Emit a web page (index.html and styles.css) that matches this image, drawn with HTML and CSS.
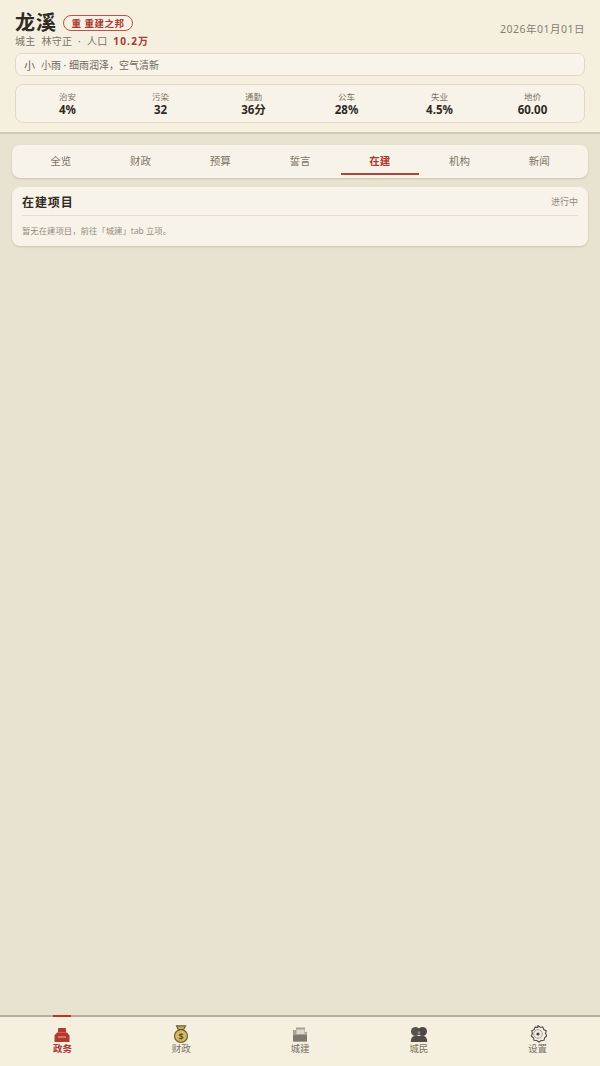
FILE: index.html
```html
<!DOCTYPE html>
<html lang="zh-CN">
<head>
    <meta charset="UTF-8">
    <meta name="viewport" content="width=device-width, initial-scale=1.0">
    <title>龙溪</title>
    <link rel="stylesheet" href="styles.css">
</head>
<body>
    <div class="app">
        <!-- City header -->
        <header class="top">
            <div class="top-row">
                <div>
                    <div class="title-row">
                        <h1 class="city">龙溪</h1>
                        <span class="badge"><span class="badge-mark">重</span>重建之邦</span>
                    </div>
                    <div class="meta">城主&nbsp; 林守正 &nbsp;·&nbsp; 人口 &nbsp;<b>10.2万</b></div>
                </div>
                <div class="date">2026年01月01日</div>
            </div>
            <div class="weather"><span class="weather-icon">小</span>小雨 · 细雨润泽，空气清新</div>
            <div class="stats">
                <div class="stat"><span class="stat-label">治安</span><span class="stat-value">4%</span></div>
                <div class="stat"><span class="stat-label">污染</span><span class="stat-value">32</span></div>
                <div class="stat"><span class="stat-label">通勤</span><span class="stat-value">36分</span></div>
                <div class="stat"><span class="stat-label">公车</span><span class="stat-value">28%</span></div>
                <div class="stat"><span class="stat-label">失业</span><span class="stat-value">4.5%</span></div>
                <div class="stat"><span class="stat-label">地价</span><span class="stat-value">60.00</span></div>
            </div>
        </header>

        <main class="content">
            <nav class="tabs">
                <a class="tab">全览</a>
                <a class="tab">财政</a>
                <a class="tab">预算</a>
                <a class="tab">誓言</a>
                <a class="tab active">在建</a>
                <a class="tab">机构</a>
                <a class="tab">新闻</a>
            </nav>
            <section class="card">
                <div class="card-head">
                    <h2>在建项目</h2>
                    <span class="card-note">进行中</span>
                </div>
                <p class="empty">暂无在建项目，前往「城建」tab 立项。</p>
            </section>
        </main>

        <!-- Bottom nav -->
        <footer class="bottom">
            <a class="nav-item active">
                <svg class="nav-icon" viewBox="0 0 18 18"><path d="M5 4Q5 3 6 3h6q1 0 1 1v3.500H5z" fill="#b5392d"/><path d="M1.500 17V10.500L4 7.500h10l2.500 3V17z" fill="#b23a2e"/><path d="M5 12h8" stroke="#e3a094" stroke-width="1.200"/></svg>
                政务
            </a>
            <a class="nav-item">
                <svg class="nav-icon" viewBox="0 0 18 18"><path d="M4.500 .8h9l-1.800 3.700H6.300z" fill="#c9a850" stroke="#6b6038" stroke-width="1.200"/><ellipse cx="9" cy="11" rx="6.500" ry="6.300" fill="#d6b95c" stroke="#6b6038" stroke-width="1.200"/><text x="9" y="14.500" class="coin">$</text></svg>
                财政
            </a>
            <a class="nav-item">
                <svg class="nav-icon" viewBox="0 0 18 18"><path d="M2 5h3V2.500h9V7h2v9.500H2z" fill="#a8a296"/><path d="M5.500 4.500h8V9h-8z" fill="#dcd8cc"/><path d="M2 10h14v6.500H2z" fill="#7f7a70"/></svg>
                城建
            </a>
            <a class="nav-item">
                <svg class="nav-icon" viewBox="0 0 18 18"><circle cx="5.500" cy="6.500" r="4.500" fill="#55524d"/><circle cx="12.500" cy="6.500" r="4.500" fill="#4b4844"/><circle cx="9" cy="7.500" r="1.500" fill="#8c8880"/><path d="M.8 17c0-5 2-6 5-6h6.400c3 0 5 1 5 6z" fill="#4f4c47"/></svg>
                城民
            </a>
            <a class="nav-item">
                <svg class="nav-icon" viewBox="0 0 18 18"><path d="M9 .8l2.200 1.500 2.700-.2.900 2.500 2.400 1.200-.6 2.700 1.100 2.500-2.100 1.700-.6 2.600-2.700.2-2.300 1.500-2.300-1.500-2.700-.2-.6-2.600-2.100-1.700 1.100-2.500-.6-2.700 2.400-1.200.9-2.500 2.700.2z" fill="#f3eee2" stroke="#4e4a44" stroke-width="1.100"/><circle cx="9" cy="9" r="4.300" fill="none" stroke="#a8a296" stroke-width="1"/><circle cx="9" cy="9" r="1.600" fill="#3f4650"/></svg>
                设置
            </a>
        </footer>
    </div>
</body>
</html>
```

FILE: styles.css
```css
* {
  box-sizing: border-box;
}

body {
  margin: 0;
  background: #e8e2d0;
  color: #2e2a24;
  font-family: "Noto Sans", "Noto Sans CJK SC", sans-serif;
}

.app {
  display: flex;
  flex-direction: column;
  height: 1066px;
}

/* Header */
.top {
  height: 134px;
  padding: 10px 15px 0;
  background: #f5efe0;
  border-bottom: 2px solid #cfc8b6;
}
.top-row {
  display: flex;
  justify-content: space-between;
  align-items: flex-start;
  height: 43px;
}
.title-row {
  display: flex;
  align-items: center;
  gap: 6px;
  height: 25px;
}
.city {
  margin: 0;
  font-size: 20px;
  font-weight: 700;
  letter-spacing: 1px;
  line-height: 25px;
}
.badge {
  display: flex;
  align-items: center;
  height: 16px;
  margin-top: 1px;
  padding: 0 7.500px;
  border: 1px solid #bb5348;
  border-radius: 8px;
  background: #f9f1e6;
  color: #a93a30;
  font-size: 9.500px;
  font-weight: 700;
  letter-spacing: .5px;
}
.badge-mark {
  margin-right: 3px;
}
.meta {
  margin-top: -2px;
  height: 16px;
  color: #7a7365;
  font-size: 10px;
  line-height: 16px;
  letter-spacing: .3px;
}
.meta b {
  color: #a93a30;
  letter-spacing: 1.200px;
}
.date {
  margin-top: 12px;
  color: #857e70;
  font-size: 10.500px;
  line-height: 14px;
  letter-spacing: .5px;
}

.weather {
  display: flex;
  align-items: center;
  height: 23px;
  padding-left: 8px;
  background: #f9f4ea;
  border: 1px solid #e0d8c3;
  border-radius: 7px;
  color: #6e6759;
  font-size: 10px;
}
.weather-icon {
  margin-right: 6px;
  font-size: 11px;
}

.stats {
  display: grid;
  grid-template-columns: repeat(6, 1fr);
  align-items: center;
  height: 39px;
  margin-top: 8px;
  padding: 0 5px;
  background: #f8f3e9;
  border: 1px solid #e0d8c3;
  border-radius: 8px;
}
.stat {
  display: flex;
  flex-direction: column;
  align-items: center;
}
.stat-label {
  color: #7a7365;
  font-size: 8.500px;
  line-height: 12px;
}
.stat-value {
  font-size: 11.500px;
  font-weight: 700;
  line-height: 14px;
}

/* Main */
.content {
  flex: 1;
  padding: 11px 12px 0;
}
.tabs {
  display: flex;
  gap: 2px;
  height: 33px;
  padding: 0 10px;
  background: #f8f3e9;
  border-radius: 8px;
  box-shadow: 0 1px 2px rgba(120, 105, 75, .25);
}
.tab {
  flex: 1;
  height: 30px;
  color: #7a7365;
  font-size: 10.500px;
  line-height: 33px;
  text-align: center;
}
.tab.active {
  border-bottom: 2px solid #a8483c;
  color: #a93a30;
  font-weight: 700;
}

.card {
  height: 59px;
  margin-top: 9px;
  padding: 4px 10px 0;
  background: #f8f3e9;
  border-radius: 8px;
  box-shadow: 0 1px 2px rgba(120, 105, 75, .25);
}
.card-head {
  display: flex;
  justify-content: space-between;
  align-items: center;
  height: 25px;
  padding-bottom: 3px;
  border-bottom: 1px solid #e6dfcd;
}
.card-head h2 {
  margin: 0;
  font-size: 12px;
  font-weight: 700;
  letter-spacing: .9px;
}
.card-note {
  color: #948c7c;
  font-size: 9px;
}
.empty {
  margin: 8px 0 0;
  color: #948c7c;
  font-size: 8.400px;
  line-height: 13px;
}

/* Bottom nav */
.bottom {
  display: flex;
  height: 51px;
  padding: 0 3px;
  background: #f5efe0;
  border-top: 2px solid #b8ae97;
}
.nav-item {
  position: relative;
  flex: 1;
  display: flex;
  flex-direction: column;
  align-items: center;
  padding-top: 8px;
  color: #7a7365;
  font-size: 9.500px;
  line-height: 11px;
}
.nav-item.active {
  color: #a93a30;
  font-weight: 700;
}
.nav-item.active::before {
  content: "";
  position: absolute;
  top: -2px;
  left: 50%;
  width: 18px;
  height: 2px;
  margin-left: -9px;
  background: #b5392d;
}
.nav-icon {
  width: 18px;
  height: 18px;
}
.coin {
  fill: #5a5030;
  font-size: 9px;
  font-weight: 700;
  text-anchor: middle;
}
```
